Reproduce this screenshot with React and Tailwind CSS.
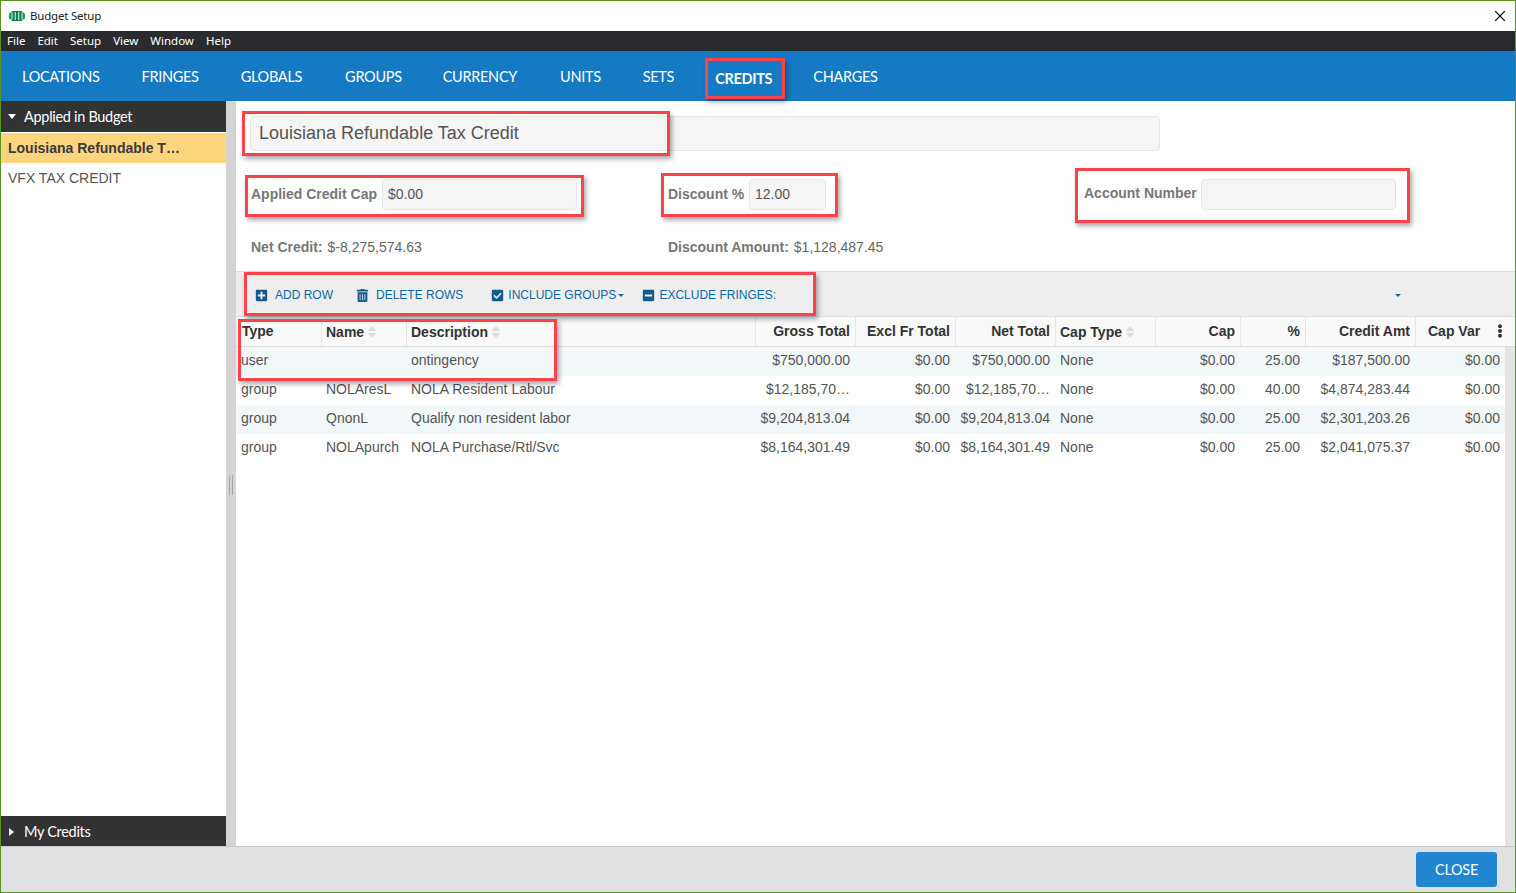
import { X } from 'lucide-react'
import { FaPlusSquare, FaTrashAlt, FaCheckSquare, FaMinusSquare, FaEllipsisV, FaSort } from 'react-icons/fa'

const tabs = [
  ['LOCATIONS', 'ml-[21px]'],
  ['FRINGES', 'ml-[42px]'],
  ['GLOBALS', 'ml-[42px]'],
  ['GROUPS', 'ml-[43px]'],
  ['CURRENCY', 'ml-[41px]'],
  ['UNITS', 'ml-[43px]'],
  ['SETS', 'ml-[42px]'],
  ['CREDITS', 'ml-[41px] pt-[4px] font-bold'],
  ['CHARGES', 'ml-[41px]'],
]

const cols = 'grid grid-cols-[85px_85px_349px_100px_100px_100px_100px_85px_65px_110px_90px]'

const rows = [
  ['user', '', 'ontingency', '$750,000.00', '$0.00', '$750,000.00', 'None', '$0.00', '25.00', '$187,500.00', '$0.00'],
  ['group', 'NOLAresL', 'NOLA Resident Labour', '$12,185,70…', '$0.00', '$12,185,70…', 'None', '$0.00', '40.00', '$4,874,283.44', '$0.00'],
  ['group', 'QnonL', 'Qualify non resident labor', '$9,204,813.04', '$0.00', '$9,204,813.04', 'None', '$0.00', '25.00', '$2,301,203.26', '$0.00'],
  ['group', 'NOLApurch', 'NOLA Purchase/Rtl/Svc', '$8,164,301.49', '$0.00', '$8,164,301.49', 'None', '$0.00', '25.00', '$2,041,075.37', '$0.00'],
]

const highlights = [
  'left-[705px] top-[58px] w-[80px] h-[41px]',
  'left-[242px] top-[111px] w-[428px] h-[45px]',
  'left-[245px] top-[175px] w-[339px] h-[42px]',
  'left-[661px] top-[173px] w-[177px] h-[44px]',
  'left-[1075px] top-[168px] w-[335px] h-[55px]',
  'left-[244px] top-[272px] w-[572px] h-[44px]',
  'left-[238px] top-[319px] w-[319px] h-[62px]',
]

function HeaderCell({ children, right, sort, className }) {
  return (
    <div className={`flex items-center h-full mr-[-1px] px-[5px] text-[14px] font-bold text-[#333] border-r border-[#e6e6e6] ${right ? 'justify-end' : ''} ${sort ? 'pt-[1px]' : ''} ${className || ''}`}>
      <span className="whitespace-nowrap">{children}</span>
      {sort && <FaSort className="ml-[1px] text-[#dcdcdc]" size={14} />}
    </div>
  )
}

function Cell({ children, right }) {
  return (
    <div className={`px-[5px] text-[14px] text-[#555] whitespace-nowrap leading-[27px] ${right ? 'text-right' : ''}`}>{children}</div>
  )
}

function ToolItem({ icon, label, className }) {
  return (
    <div className={`flex items-center text-[12px] text-[#0f6aa5] ${className}`}>
      {icon}
      <span>{label}</span>
    </div>
  )
}

export default function App() {
  return (
    <div className="relative w-[1516px] h-[893px] flex flex-col overflow-hidden bg-white border border-[#5b9320] font-['Liberation_Sans',sans-serif]">
      {/* title bar */}
      <div className="h-[30px] flex items-center shrink-0 pl-[8px] pr-[6px] bg-white">
        <svg width="16" height="10" viewBox="0 0 16 10" className="mr-[5px]">
          <rect x="0" y="1.5" width="16" height="7" rx="2" fill="#1d9a63" />
          <rect x="2.5" y="0" width="11" height="10" rx="1" fill="#12804f" />
          <path d="M3 1.5v7M6.3 1v8M9.7 1v8M13 1.5v7" stroke="#bfeedd" strokeWidth="1.1" />
        </svg>
        <span className="text-[11.5px] tracking-[-0.2px] text-[#222] font-['Noto_Sans',sans-serif]">Budget Setup</span>
        <X size={18} strokeWidth={1.5} className="ml-auto text-[#111]" />
      </div>

      {/* menu */}
      <div className="h-[20px] shrink-0 bg-[#2b2c30] flex items-center pl-[6px] gap-[12px] text-[11.5px] text-white font-['Noto_Sans',sans-serif]">
        {['File', 'Edit', 'Setup', 'View', 'Window', 'Help'].map(m => <span key={m}>{m}</span>)}
      </div>

      {/* tabs */}
      <div className="h-[50px] shrink-0 pt-[1px] bg-[#147ac3] flex items-center text-[14.5px] tracking-[-0.3px] text-white font-['Lato',sans-serif]">
        {tabs.map(([t, c]) => <span key={t} className={c}>{t}</span>)}
      </div>

      <div className="flex-1 flex min-h-0">
        {/* sidebar */}
        <div className="w-[225px] shrink-0 flex flex-col bg-white">
          <div className="h-[31px] bg-[#333333] flex items-center text-[14.5px] tracking-[-0.3px] text-white font-['Lato',sans-serif]">
            <span className="ml-[7px] mr-[8px] w-0 h-0 border-l-[4px] border-r-[4px] border-t-[5px] border-l-transparent border-r-transparent border-t-white" />
            Applied in Budget
          </div>
          <div className="mt-[1px] h-[30px] bg-[#fdd57f] flex items-center pl-[7px] text-[14px] font-bold text-[#3a3a3a]">Louisiana Refundable T…</div>
          <div className="h-[30px] flex items-center pl-[7px] text-[14px] text-[#555]">VFX TAX CREDIT</div>
          <div className="mt-auto h-[30px] pt-[2px] bg-[#333333] flex items-center text-[14.5px] tracking-[-0.3px] text-white font-['Lato',sans-serif]">
            <span className="ml-[8px] mr-[10px] w-0 h-0 border-t-[4px] border-b-[4px] border-l-[5px] border-t-transparent border-b-transparent border-l-white" />
            My Credits
          </div>
        </div>

        {/* splitter */}
        <div className="w-[10px] shrink-0 bg-[#d4d4d4] flex items-center justify-center">
          <div className="mt-[23px] w-[4px] h-[20px] border-x border-[#a8a8a8]" />
        </div>

        {/* main */}
        <div className="flex-1 min-w-0 flex flex-col bg-white">
          <div className="h-[170px] shrink-0 flex flex-col">
            <div className="ml-[14px] mt-[15px] w-[910px] h-[35px] flex items-center pl-[8px] bg-[#f5f5f5] border border-[#e6e6e6] rounded-[4px] text-[18px] text-[#555]">
              Louisiana Refundable Tax Credit
            </div>
            <div className="grid grid-cols-[417px_416px_1fr] ml-[15px] mt-[28px]">
              <div className="flex items-center">
                <span className="text-[14px] font-bold text-[#777] w-[131px] whitespace-nowrap">Applied Credit Cap</span>
                <div className="w-[195px] h-[31px] flex items-center pl-[5px] bg-[#f5f5f5] border border-[#e6e6e6] rounded-[4px] text-[14px] text-[#555]">$0.00</div>
              </div>
              <div className="flex items-center">
                <span className="text-[14px] font-bold text-[#777] w-[81px] whitespace-nowrap">Discount %</span>
                <div className="w-[77px] h-[31px] flex items-center pl-[5px] bg-[#f5f5f5] border border-[#e6e6e6] rounded-[4px] text-[14px] text-[#555]">12.00</div>
              </div>
              <div className="flex items-center">
                <span className="mt-[-2px] text-[14px] font-bold text-[#777] w-[117px] whitespace-nowrap">Account Number</span>
                <div className="w-[195px] h-[31px] bg-[#f5f5f5] border border-[#e6e6e6] rounded-[4px]" />
              </div>
            </div>
            <div className="grid grid-cols-[417px_1fr] ml-[15px] mt-[27px] text-[14px] text-[#666]">
              <div className="flex gap-[5px]"><span className="font-bold text-[#777]">Net Credit:</span><span>$-8,275,574.63</span></div>
              <div className="flex gap-[5px]"><span className="font-bold text-[#777]">Discount Amount:</span><span>$1,128,487.45</span></div>
            </div>
          </div>

          {/* toolbar */}
          <div className="relative h-[46px] shrink-0 pt-[2px] bg-[#eeeeee] border-y border-[#dddddd] flex items-center pl-[19px]">
            <ToolItem icon={<FaPlusSquare size={13} className="mr-[7px] text-[#0e5c91]" />} label="ADD ROW" />
            <ToolItem icon={<FaTrashAlt size={13} className="mr-[7px] text-[#0e5c91]" />} label="DELETE ROWS" className="ml-[23px]" />
            <ToolItem icon={<FaCheckSquare size={13} className="mr-[4px] text-[#0e5c91]" />} label="INCLUDE GROUPS" className="ml-[28px]" />
            <span className="ml-[2px] w-0 h-0 border-l-[3.5px] border-r-[3.5px] border-t-[3.5px] border-l-transparent border-r-transparent border-t-[#0f6aa5]" />
            <ToolItem icon={<FaMinusSquare size={13} className="mr-[4px] text-[#0e5c91]" />} label="EXCLUDE FRINGES:" className="ml-[18px]" />
            <span className="ml-auto mr-[114px] w-0 h-0 border-l-[3.5px] border-r-[3.5px] border-t-[3.5px] border-l-transparent border-r-transparent border-t-[#0f6aa5]" />
          </div>

          {/* table */}
          <div className="flex-1 min-h-0 flex flex-col">
            <div className={`${cols} h-[30px] shrink-0 bg-[#f9f9f9] border-b border-[#dddddd] items-center`}>
              <HeaderCell className="pl-[6px]">Type</HeaderCell>
              <HeaderCell sort>Name</HeaderCell>
              <HeaderCell sort>Description</HeaderCell>
              <HeaderCell right>Gross Total</HeaderCell>
              <HeaderCell right>Excl Fr Total</HeaderCell>
              <HeaderCell right>Net Total</HeaderCell>
              <HeaderCell sort>Cap Type</HeaderCell>
              <HeaderCell right>Cap</HeaderCell>
              <HeaderCell right>%</HeaderCell>
              <HeaderCell right>Credit Amt</HeaderCell>
              <div className="relative flex items-center h-full pl-[13px] text-[14px] font-bold text-[#333]">
                Cap Var
                <FaEllipsisV size={14} className="absolute right-[-2px] top-[7px] text-[#333]" />
              </div>
            </div>
            <div className="flex-1 min-h-0 flex">
              <div className="w-[1269px]">
                {rows.map((r, i) => (
                  <div key={i} className={`${cols} h-[29px] ${i % 2 === 0 ? 'bg-[#f2f7fa]' : 'bg-white'}`}>
                    {r.map((c, j) => <Cell key={j} right={[3, 4, 5, 7, 8, 9, 10].includes(j)}>{c}</Cell>)}
                  </div>
                ))}
              </div>
              <div className="flex-1 bg-[#e4e4e4]" />
            </div>
          </div>
        </div>
      </div>

      {/* footer */}
      <div className="h-[46px] shrink-0 bg-[#e0e1e3] border-t border-[#c8c8c8] flex items-center justify-end pr-[18px]">
        <div className="w-[81px] h-[35px] bg-[#2285d2] rounded-[3px] flex items-center justify-center text-[14.5px] tracking-[-0.3px] text-white font-['Lato',sans-serif]">CLOSE</div>
      </div>

      {/* review annotations drawn on top of the screenshot */}
      {highlights.map(h => (
        <div key={h} className={`absolute -translate-x-px -translate-y-px border-[3px] border-[#f8434a] shadow-[2px_3px_5px_rgba(0,0,0,0.35)] pointer-events-none ${h}`} />
      ))}
    </div>
  )
}
